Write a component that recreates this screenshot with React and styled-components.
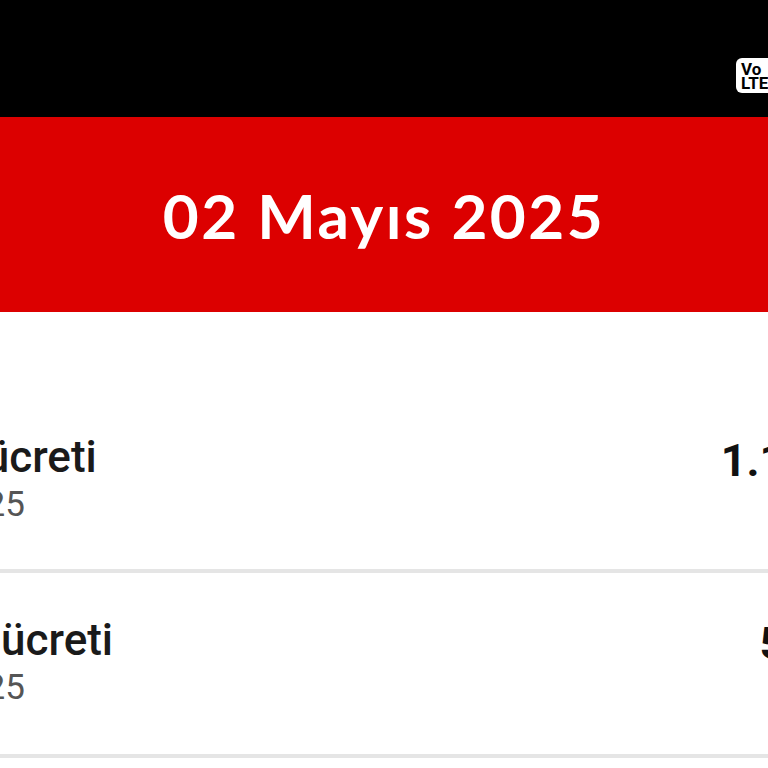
import React from "react";
import styled, { createGlobalStyle } from "styled-components";

const Global = createGlobalStyle`
  html, body {
    margin: 0;
    padding: 0;
    background: #ffffff;
    overflow: hidden;
  }
  body {
    font-family: Roboto, "Liberation Sans", sans-serif;
  }
`;

const Screen = styled.div`
  width: 1160px;
  margin-left: -196px;
  background: #ffffff;
`;

const StatusBar = styled.div`
  height: 117px;
  background: #000000;
  display: flex;
  justify-content: flex-end;
  align-items: flex-start;
  padding: 58px 94px 0 0;
  box-sizing: border-box;
  gap: 10px;
`;

const VolteBadge = styled.div`
  width: 42px;
  height: 35px;
  background: #ffffff;
  border-radius: 6px;
  display: flex;
  flex-direction: column;
  justify-content: center;
  padding-left: 5px;
  box-sizing: border-box;
  color: #000000;
  font-family: Roboto, "Liberation Sans", sans-serif;
  font-weight: 700;
  font-size: 17px;
  line-height: 14px;
`;

const StatusIcons = styled.div`
  display: flex;
  align-items: center;
  gap: 8px;
  height: 35px;
`;

const Header = styled.div`
  height: 195px;
  background: #dc0000;
  display: flex;
  align-items: center;
  justify-content: center;
`;

const DateTitle = styled.h1`
  margin: 0;
  color: #ffffff;
  font-family: Lato, "Open Sans", sans-serif;
  font-weight: 700;
  font-size: 62px;
  letter-spacing: 2.5px;
`;

const List = styled.div`
  padding-top: 121px;
`;

const Row = styled.div`
  display: flex;
  justify-content: space-between;
  align-items: flex-start;
  padding: ${(p) => p.$top}px 2px 0 45px;
  height: ${(p) => p.$height}px;
  box-sizing: border-box;
  border-bottom: 4px solid #e5e5e5;
`;

const Info = styled.div`
  display: flex;
  flex-direction: column;
`;

const Title = styled.div`
  font-size: 44px;
  line-height: 48px;
  color: #1a1a1a;
  font-weight: 500;
`;

const Subtitle = styled.div`
  font-size: 35px;
  line-height: 48px;
  color: #555555;
`;

const Amount = styled.div`
  font-size: 45px;
  font-weight: 700;
  color: #111111;
  line-height: 48px;
  padding-top: 4px;
`;

const items = [
  { title: "Fatura ücreti", date: "02.05.2025", amount: "1.199,00 TL", top: 0, height: 140 },
  { title: "Hizmet ücreti", date: "02.05.2025", amount: "599,00 TL", top: 43, height: 185 },
];

function App() {
  return (
    <>
      <Global />
      <Screen>
        <StatusBar>
          <VolteBadge>
            <span>Vo</span>
            <span>LTE</span>
          </VolteBadge>
          <StatusIcons>
            <svg width="30" height="24" viewBox="0 0 30 24">
              <rect x="0" y="16" width="5" height="8" fill="#fff" />
              <rect x="8" y="11" width="5" height="13" fill="#fff" />
              <rect x="16" y="6" width="5" height="18" fill="#fff" />
              <rect x="24" y="0" width="5" height="24" fill="#fff" />
            </svg>
            <svg width="44" height="22" viewBox="0 0 44 22">
              <rect x="1" y="1" width="38" height="20" rx="4" fill="none" stroke="#fff" strokeWidth="2" />
              <rect x="4" y="4" width="28" height="14" rx="2" fill="#fff" />
              <rect x="40" y="7" width="3" height="8" fill="#fff" />
            </svg>
          </StatusIcons>
        </StatusBar>
        <Header>
          <DateTitle>02 Mayıs 2025</DateTitle>
        </Header>
        <List>
          {items.map((it, i) => (
            <Row key={i} $top={it.top} $height={it.height}>
              <Info>
                <Title>{it.title}</Title>
                <Subtitle>{it.date}</Subtitle>
              </Info>
              <Amount>{it.amount}</Amount>
            </Row>
          ))}
        </List>
      </Screen>
    </>
  );
}

export default App;
